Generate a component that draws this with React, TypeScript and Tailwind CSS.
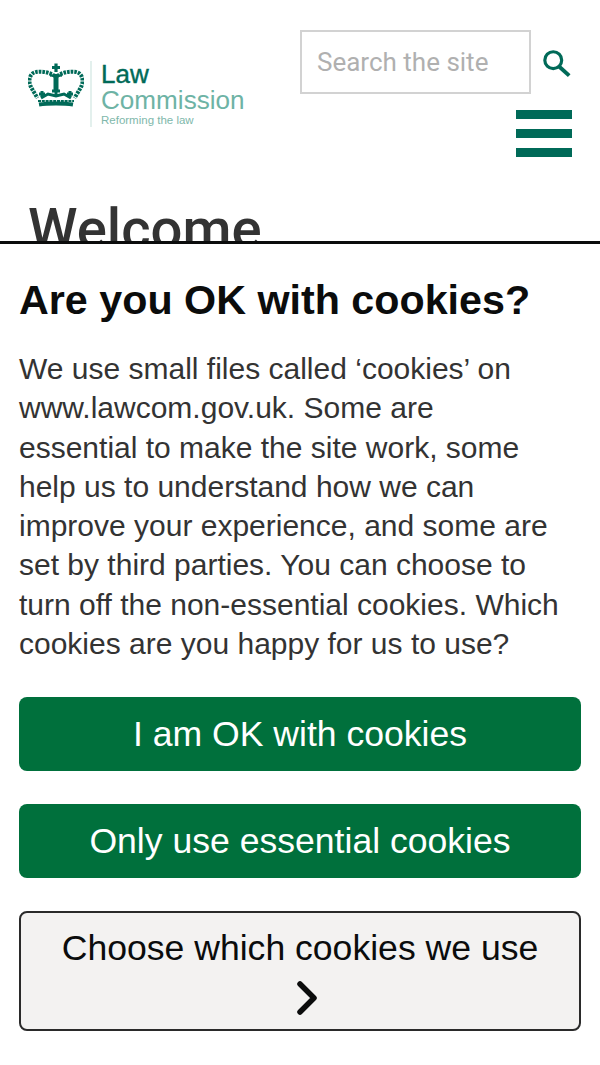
const sans = "font-['Liberation_Sans',Arial,sans-serif]";

function Crown() {
    return (
        <svg width="56" height="46" viewBox="0 0 56 46" className="shrink-0" fill="none" stroke="#006a58">
            {/* beaded arches */}
            <path d="M27 13 C21 9 13 8 8 9 C2 10 0 17 2.5 23 C4.5 27 7 31 9.5 35" strokeWidth="4" strokeDasharray="2.6 1" />
            <path d="M29 13 C35 9 43 8 48 9 C54 10 56 17 53.5 23 C51.5 27 49 31 46.5 35" strokeWidth="4" strokeDasharray="2.6 1" />
            {/* centre bar and cross */}
            <path d="M28 11 V29" strokeWidth="5" />
            <path d="M22 12.5 H34" strokeWidth="2.4" />
            <path d="M28 0.5 V9 M24 4.5 H32" strokeWidth="3.2" />
            {/* points and band */}
            <path d="M14 28 V34 M11 31 H17 M28 24 V34 M24 28 H32 M42 28 V34 M39 31 H45" strokeWidth="3" />
            <path d="M13 35 L20 31 L28 33 L36 31 L43 35" strokeWidth="3" />
            <path d="M10 38 H46" strokeWidth="2" strokeDasharray="3 0.8" />
            <path d="M11 41.5 C20 40 36 40 45 41.5" strokeWidth="4" />
        </svg>
    );
}

function Logo() {
    return (
        <div className="flex items-center mt-[61px] ml-[28px] h-[66px]">
            <div className="-mt-[16px]"><Crown /></div>
            <div className="w-[2px] h-[66px] bg-[#e3f0ed] ml-[6px] mr-[9px]"></div>
            <div className="flex flex-col self-start font-['Liberation_Sans',sans-serif]">
                <div className="text-[26px] leading-[26px] text-[#006a58] [-webkit-text-stroke:0.4px_#006a58]">Law</div>
                <div className="text-[26.1px] leading-[26px] text-[#6eb3a5]">Commission</div>
                <div className="text-[11.5px] leading-[14px] text-[#80b8ab]">Reforming the law</div>
            </div>
        </div>
    );
}

function SearchBox() {
    return (
        <div className="flex items-center">
            <div className="w-[231px] h-[64px] border-2 border-[#d2d2d2] flex items-center pl-[15px] font-['Roboto',sans-serif] text-[26px] text-[#b0b0b0]">
                Search the site
            </div>
            <svg width="30" height="30" viewBox="0 0 32 30" fill="none" stroke="#006a58" className="ml-[11px] mt-[2px]">
                <circle cx="12" cy="12" r="9" strokeWidth="3.4" />
                <path d="M18.5 19 L29 28.5" strokeWidth="4.2" />
            </svg>
        </div>
    );
}

function Hamburger() {
    return (
        <div className="flex flex-col gap-[10px] w-[56px] mt-[16px] mr-[28px] self-end">
            <div className="h-[9px] bg-[#006a58]"></div>
            <div className="h-[9px] bg-[#006a58]"></div>
            <div className="h-[9px] bg-[#006a58]"></div>
        </div>
    );
}

export default function App() {
    return (
        <div className="w-[600px] h-[1065px] bg-white overflow-hidden flex flex-col">
            <div className="h-[241px] shrink-0 overflow-hidden">
                <div className="flex justify-between">
                    <Logo />
                    <div className="flex flex-col items-end mt-[30px]">
                        <div className="mr-[28px]"><SearchBox /></div>
                        <Hamburger />
                    </div>
                </div>
                <h1 className="ml-[28px] mt-[40px] font-['Roboto',sans-serif] font-medium text-[56.25px] leading-[64px] text-[#333333]">Welcome</h1>
            </div>
            <div className={`border-t-[3px] border-[#0b0c0c] px-[19px] pt-[31px] ${sans}`}>
                <h2 className="text-[41.25px] leading-[50px] font-bold text-[#0b0c0c]">Are you OK with cookies?</h2>
                <p className="mt-[24px] w-[540px] text-[30px] leading-[39.3px] text-[#333333]">
                    We use small files called ‘cookies’ on www.lawcom.gov.uk. Some are essential to make the site work, some help us to understand how we can improve your experience, and some are set by third parties. You can choose to turn off the non-essential cookies. Which cookies are you happy for us to use?
                </p>
                <div className="mt-[34px] flex flex-col gap-[33px]">
                    <button className="h-[74px] rounded-[8px] bg-[#00703c] text-white text-[35.6px] leading-[40px]">I am OK with cookies</button>
                    <button className="h-[74px] rounded-[8px] bg-[#00703c] text-white text-[35.6px] leading-[40px]">Only use essential cookies</button>
                    <button className="h-[120px] rounded-[8px] border-2 border-[#2a2a2a] bg-[#f3f2f1] text-[#0b0c0c] text-[35.6px] leading-[40px] flex flex-col items-center pt-[15px]">
                        Choose which cookies we use
                        <svg width="20" height="36" viewBox="0 0 20 36" fill="none" stroke="#0b0c0c" strokeWidth="5.5" strokeLinecap="round" strokeLinejoin="round" className="mt-[12px] ml-[14px]">
                            <path d="M3 4 L17 18 L3 32" />
                        </svg>
                    </button>
                </div>
            </div>
        </div>
    );
}
